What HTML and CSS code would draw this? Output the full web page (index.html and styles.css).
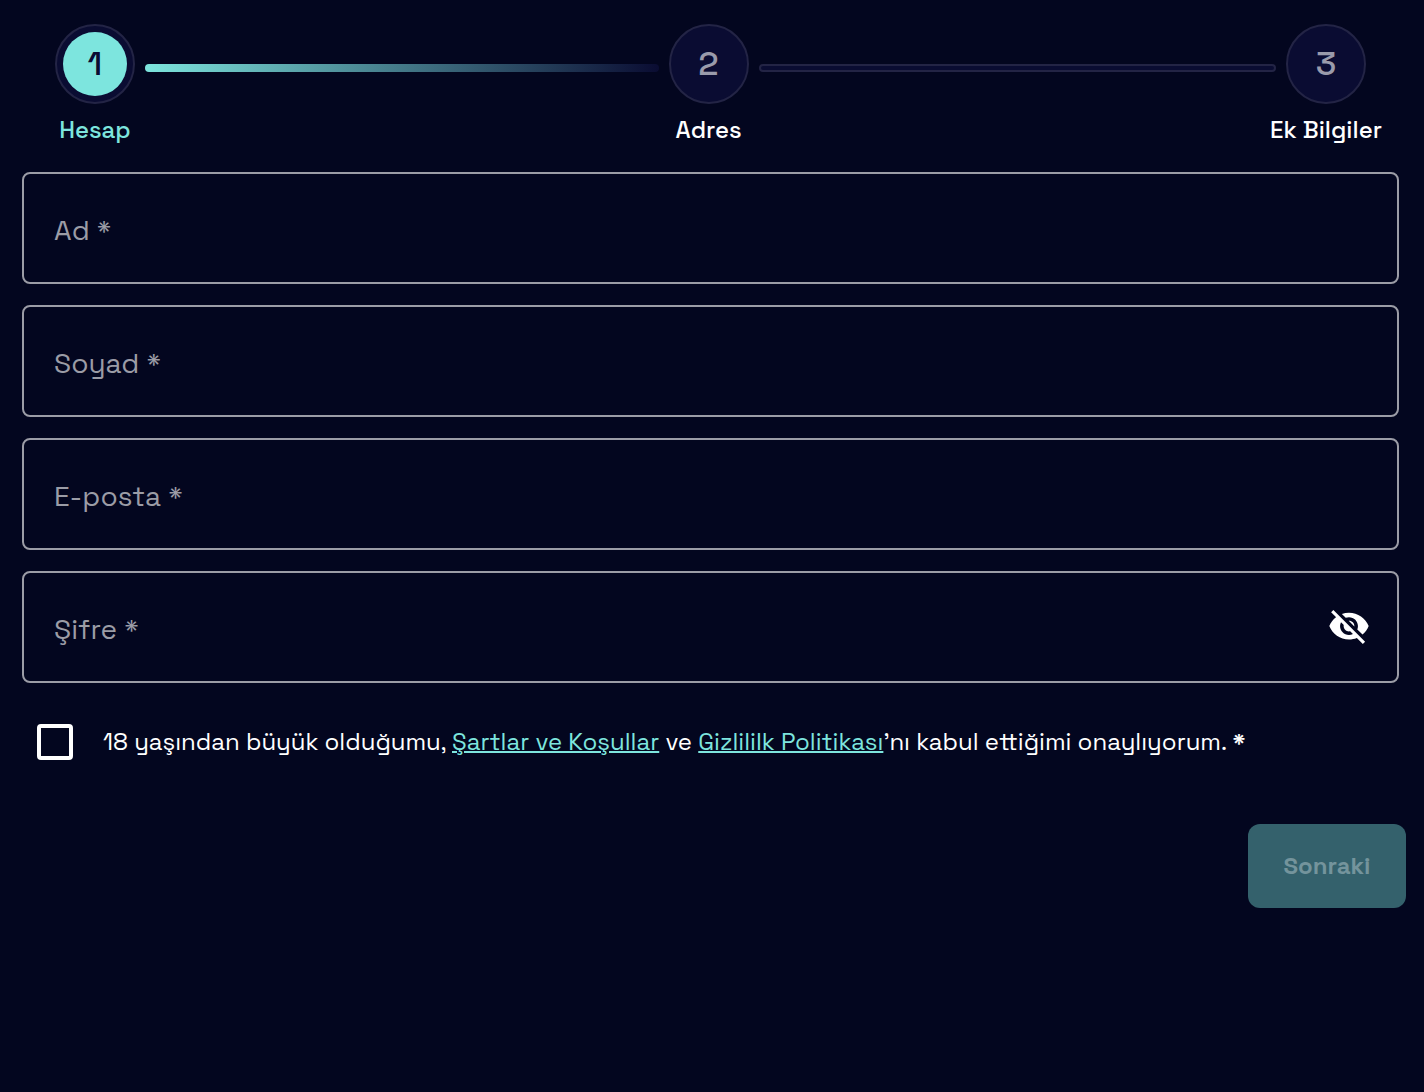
FILE: index.html
```html
<!DOCTYPE html>
<html lang="tr">
<head>
  <meta charset="UTF-8" />
  <meta name="viewport" content="width=device-width, initial-scale=1.0" />
  <title>Hesap</title>
  <link rel="stylesheet" href="styles.css">
</head>
<body>
<form class="signup">

  <!-- STEPPER -->
  <ol class="stepper">
    <li class="step active">
      <span class="circle"><span class="number">1</span></span>
      <span class="step-label">Hesap</span>
    </li>
    <li class="line filled" role="presentation"></li>
    <li class="step">
      <span class="circle"><span class="number">2</span></span>
      <span class="step-label">Adres</span>
    </li>
    <li class="line" role="presentation"></li>
    <li class="step">
      <span class="circle"><span class="number">3</span></span>
      <span class="step-label">Ek Bilgiler</span>
    </li>
  </ol>

  <!-- FIELDS -->
  <div class="fields">
    <div class="field">
      <input type="text" id="ad" placeholder=" " required>
      <label for="ad">Ad *</label>
    </div>
    <div class="field">
      <input type="text" id="soyad" placeholder=" " required>
      <label for="soyad">Soyad *</label>
    </div>
    <div class="field">
      <input type="email" id="eposta" placeholder=" " required>
      <label for="eposta">E-posta *</label>
    </div>
    <div class="field">
      <input type="password" id="sifre" placeholder=" " required>
      <label for="sifre">Şifre *</label>
      <button type="button" class="toggle">
        <svg viewBox="1 3 22 19" width="40" height="34" fill="#fff">
          <path d="M12 7c2.760 0 5 2.240 5 5 0 .65-.13 1.260-.36 1.830l2.920 2.920c1.510-1.260 2.700-2.890 3.430-4.750-1.730-4.390-6-7.500-11-7.500-1.400 0-2.740.25-3.980.7l2.160 2.160C10.740 7.130 11.350 7 12 7zM2 4.270l2.280 2.280.46.46C3.080 8.300 1.780 10.020 1 12c1.730 4.390 6 7.500 11 7.500 1.550 0 3.030-.3 4.380-.84l.42.42L19.730 22 21 20.730 3.270 3 2 4.270zM7.530 9.800l1.550 1.550c-.05.21-.08.43-.08.65 0 1.660 1.340 3 3 3 .22 0 .44-.03.65-.08l1.550 1.550c-.67.33-1.410.53-2.200.53-2.760 0-5-2.240-5-5 0-.79.2-1.530.53-2.200zm4.310-.78l3.150 3.150.02-.16c0-1.660-1.340-3-3-3l-.17.01z"/>
        </svg>
      </button>
    </div>
  </div>

  <!-- CONSENT -->
  <div class="consent">
    <input type="checkbox" id="onay" required>
    <label for="onay">18 yaşından büyük olduğumu, <a href="#">Şartlar ve Koşullar</a> ve <a href="#">Gizlililk Politikası</a>’nı kabul ettiğimi onaylıyorum. <span class="required">*</span></label>
  </div>

  <div class="actions">
    <button type="submit" class="btn-next" disabled>Sonraki</button>
  </div>

</form>
</body>
</html>
```

FILE: styles.css
```css
* { box-sizing: border-box; margin: 0; padding: 0; }
body {
  font-family: "Space Grotesk", Inter, "Open Sans", sans-serif;
  background: #03061f;
  color: #fff;
}
.signup { padding: 24px 18px 24px 22px; }

/* STEPPER */
.stepper {
  display: flex;
  list-style: none;
  padding: 0 40px 0 33px;
}
.step {
  display: flex;
  flex-direction: column;
  align-items: center;
  gap: 10px;
  width: 80px;
}
.circle {
  display: flex;
  width: 80px;
  height: 80px;
  padding: 6px;
  border: 2px solid #232445;
  border-radius: 50%;
  background: #0a0c32;
}
.number {
  display: flex;
  flex: 1;
  align-items: center;
  justify-content: center;
  border-radius: 50%;
  font-size: 34px;
  font-weight: 500;
  line-height: 40px;
  color: #9a9bab;
}
.step-label {
  font-size: 24px;
  font-weight: 500;
  line-height: 32px;
  white-space: nowrap;
}
.step.active .number { background: #7de5de; color: #0a0c32; }
.step.active .step-label { color: #7de5de; }
.line {
  box-sizing: content-box;
  flex: 1;
  height: 4px;
  margin: 40px 10px 0;
  border: 2px solid #232445;
  border-radius: 4px;
  background: #0a0c32;
}
.line.filled {
  height: 8px;
  border: none;
  background: linear-gradient(to right, #7de5de, #0a0c32);
}

/* FIELDS */
.fields {
  display: grid;
  gap: 21px;
  margin: 26px 7px 0 0;
}
.field {
  display: grid;
  align-items: center;
}
.field > * { grid-area: 1 / 1; }
.field input {
  width: 100%;
  height: 112px;
  padding: 0 30px;
  border: 2px solid #9b9ca6;
  border-radius: 8px;
  background: transparent;
  color: #fff;
  font-family: inherit;
  font-size: 28px;
  outline: none;
}
.field input:focus { border-color: #7de5de; }
.field input:not(:placeholder-shown) + label { visibility: hidden; }
.field label {
  padding: 4px 32px 0;
  font-size: 28px;
  line-height: 36px;
  color: #9b9ca6;
  pointer-events: none;
}
.toggle {
  display: flex;
  justify-self: end;
  margin-right: 30px;
  border: none;
  background: none;
  cursor: pointer;
}

/* CONSENT */
.consent {
  display: flex;
  align-items: center;
  gap: 30px;
  margin-top: 41px;
  padding-left: 15px;
}
.consent input {
  appearance: none;
  flex: none;
  width: 36px;
  height: 36px;
  border: 4px solid #fff;
  border-radius: 4px;
}
.consent input:checked { background: #7de5de; }
.consent label { font-size: 24px; line-height: 36px; }
.consent a {
  color: #7de5de;
  text-decoration-thickness: 2px;
}
.consent .required { font-weight: 700; }

/* BUTTON */
.actions {
  display: flex;
  justify-content: flex-end;
  margin-top: 64px;
}
.btn-next {
  min-width: 158px;
  height: 84px;
  padding: 0 32px 2px;
  border: none;
  border-radius: 12px;
  background: #7de5de;
  color: #03061f;
  font-family: inherit;
  font-size: 24px;
  font-weight: 700;
}
.btn-next:disabled { background: #34616c; color: #74949c; }
```
